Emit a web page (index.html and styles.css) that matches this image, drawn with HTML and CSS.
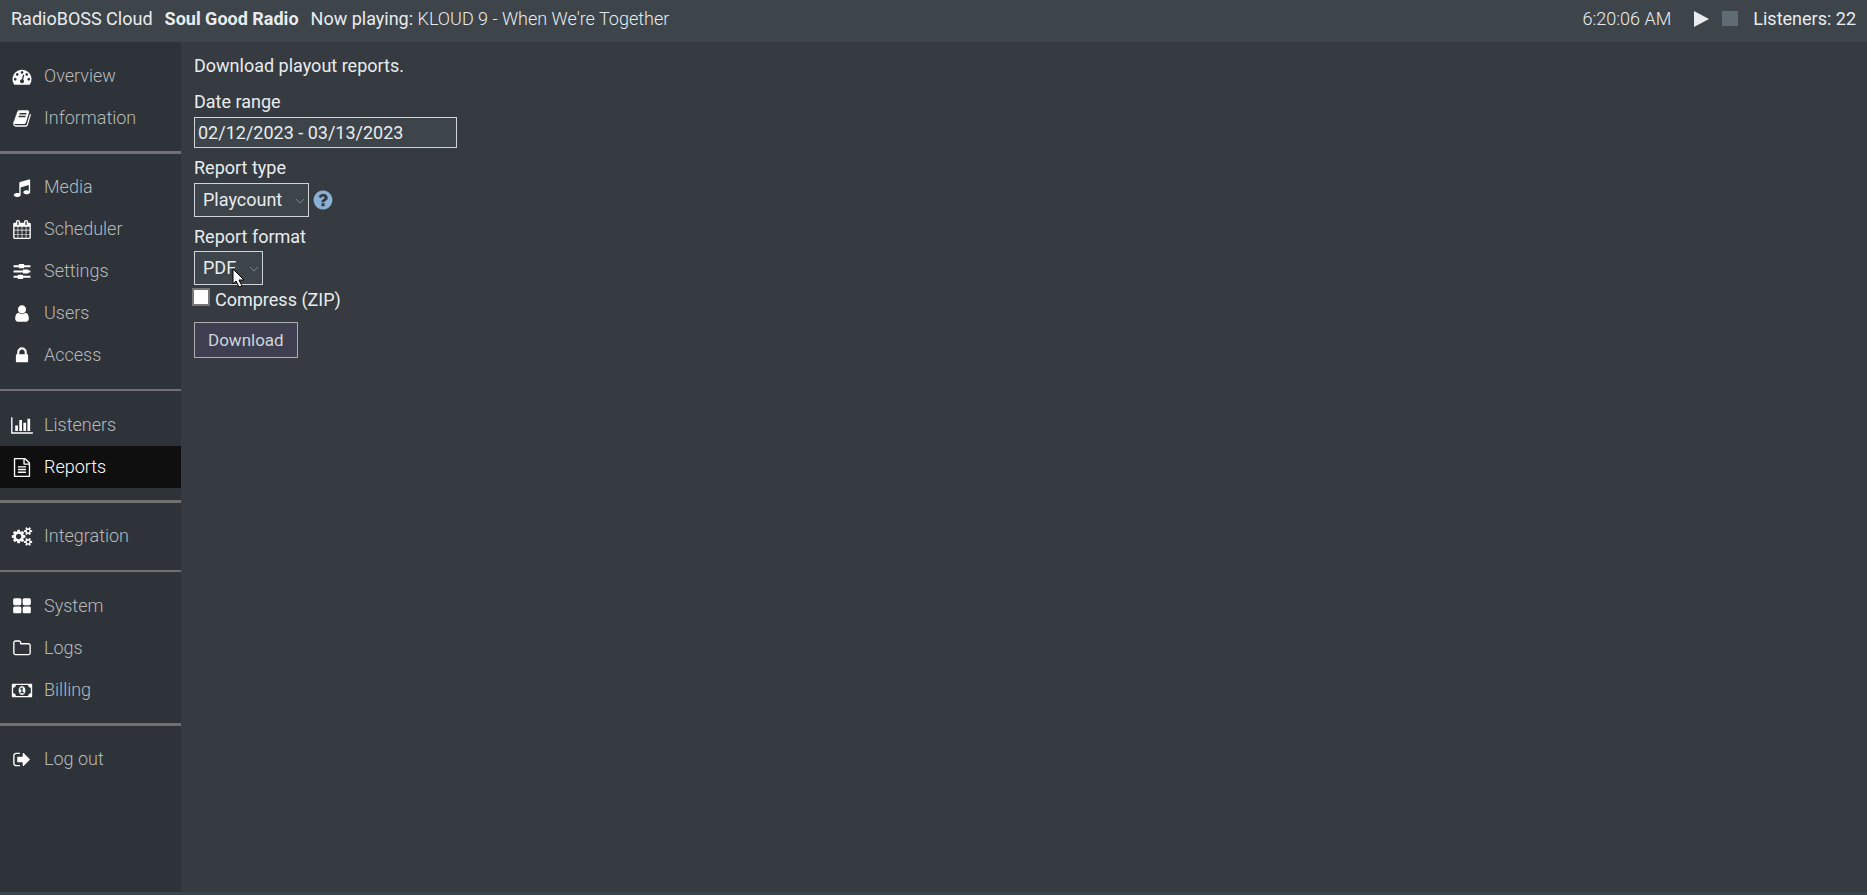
FILE: index.html
```html
<!DOCTYPE html>
<html lang="en">
<head>
  <meta charset="UTF-8" />
  <meta name="viewport" content="width=device-width, initial-scale=1.0"/>
  <title>RadioBOSS Cloud - Reports</title>
  <link rel="stylesheet" href="styles.css">
</head>
<body>
  <header class="topbar">
    <div class="topbar-left">
      <span>RadioBOSS Cloud</span>
      <strong>Soul Good Radio</strong>
      <span>Now playing: <span class="light">KLOUD 9 - When We're Together</span></span>
    </div>
    <div class="topbar-right">
      <span class="light">6:20:06 AM</span>
      <div class="player">
        <button class="player-btn" aria-label="Play"><svg width="16" height="18" viewBox="0 0 16 18"><path d="M0 1L15 9L0 17z"/></svg></button>
        <button class="player-btn stop" aria-label="Stop"><svg width="16" height="18" viewBox="0 0 16 18"><path d="M0 1h16v15H0z"/></svg></button>
      </div>
      <span>Listeners: 22</span>
    </div>
  </header>

  <div class="layout">
    <nav class="sidebar">
      <a href="#"><svg class="icon" viewBox="0 0 1792 1792"><path d="M384 1152q0-53-37.500-90.500t-90.500-37.500-90.500 37.500-37.500 90.500 37.500 90.500 90.500 37.500 90.500-37.500 37.500-90.500zm192-448q0-53-37.500-90.500t-90.500-37.500-90.500 37.500-37.500 90.500 37.500 90.500 90.500 37.500 90.500-37.500 37.500-90.500zm428 481l101-382q6-26-7.500-48.500t-38.500-29.500-48 6.500-30 39.500l-101 382q-60 5-107 43.500t-63 98.500q-20 77 20 146t117 89 146-20 89-117q16-60-6-117t-72-91zm660-33q0-53-37.500-90.500t-90.500-37.500-90.500 37.500-37.500 90.500 37.500 90.500 90.500 37.500 90.500-37.500 37.500-90.500zm-640-640q0-53-37.500-90.500t-90.500-37.500-90.500 37.500-37.500 90.500 37.500 90.500 90.500 37.500 90.500-37.500 37.500-90.500zm448 192q0-53-37.500-90.500t-90.500-37.500-90.500 37.500-37.500 90.500 37.500 90.500 90.500 37.500 90.500-37.500 37.500-90.500zm320 448q0 261-141 483-19 29-54 29h-1402q-35 0-54-29-141-221-141-483 0-182 71-348t191-286 286-191 348-71 348 71 286 191 191 286 71 348z"/></svg>Overview</a>
      <a href="#"><svg class="icon" viewBox="0 0 1792 1792"><path d="M1703 478q40 57 18 129l-275 906q-19 64-76.5 107.5t-122.500 43.500h-923q-77 0-148.500-53.500t-99.500-131.500q-24-67-2-127 0-4 3-27t4-37q1-8-3-21.500t-3-19.500q2-11 8-21t16.500-23.500 16.500-23.500q23-38 45-91.500t30-91.500q3-10 .5-30t-.5-28q3-11 17-28t17-23q21-36 42-92t25-90q1-9-2.500-32t.5-28q4-13 22-30.500t22-22.500q19-26 42.500-84.500t27.500-96.500q1-8-3-25.500t-2-26.500q2-8 9-18t18-23 17-21q8-12 16.500-30.500t15-35 16-36 19.500-32 26.500-23.500 36-11.500 47.500 5.500l-1 3q38-9 51-9h761q74 0 114 56t18 130l-274 906q-36 119-71.500 153.500t-128.500 34.500h-869q-27 0-38 15-11 16-1 43 24 70 144 70h923q29 0 56-15.500t35-41.500l300-987q7-22 5-57 38 15 59 43zm-1064 2q-4 13 2 22.500t20 9.500h608q13 0 25.500-9.500t16.500-22.500l21-64q4-13-2-22.500t-20-9.500h-608q-13 0-25.500 9.500t-16.500 22.500zm-83 256q-4 13 2 22.500t20 9.500h608q13 0 25.500-9.500t16.500-22.500l21-64q4-13-2-22.500t-20-9.500h-608q-13 0-25.500 9.500t-16.500 22.500z"/></svg>Information</a>
      <hr>
      <a href="#"><svg class="icon" viewBox="0 0 1792 1792"><path d="M1664 224v1120q0 50-34 89t-86 60.500-103.500 32-96.500 10.500-96.500-10.500-103.500-32-86-60.500-34-89 34-89 86-60.500 103.500-32 96.500-10.500q105 0 192 39v-537l-768 237v709q0 50-34 89t-86 60.500-103.500 32-96.500 10.500-96.500-10.500-103.500-32-86-60.500-34-89 34-89 86-60.500 103.500-32 96.500-10.500q105 0 192 39v-967q0-31 19-56.500t49-35.500l832-256q12-4 28-4 40 0 68 28t28 68z"/></svg>Media</a>
      <a href="#"><svg class="icon" viewBox="0 0 1792 1792"><path d="M192 1664h288v-288h-288v288zm352 0h320v-288h-320v288zm-352-352h288v-320h-288v320zm352 0h320v-320h-320v320zm-352-384h288v-288h-288v288zm736 736h320v-288h-320v288zm-384-736h320v-288h-320v288zm768 736h288v-288h-288v288zm-384-352h320v-320h-320v320zm-352-864v-288q0-13-9.500-22.500t-22.500-9.500h-64q-13 0-22.500 9.500t-9.500 22.500v288q0 13 9.500 22.500t22.500 9.500h64q13 0 22.500-9.500t9.500-22.500zm736 864h288v-320h-288v320zm-384-384h320v-288h-320v288zm384 0h288v-288h-288v288zm32-480v-288q0-13-9.500-22.500t-22.500-9.500h-64q-13 0-22.500 9.500t-9.500 22.500v288q0 13 9.500 22.500t22.500 9.500h64q13 0 22.500-9.500t9.500-22.500zm384-64v1280q0 52-38 90t-90 38h-1408q-52 0-90-38t-38-90v-1280q0-52 38-90t90-38h128v-96q0-66 47-113t113-47h64q66 0 113 47t47 113v96h384v-96q0-66 47-113t113-47h64q66 0 113 47t47 113v96h128q52 0 90 38t38 90z"/></svg>Scheduler</a>
      <a href="#"><svg class="icon" viewBox="0 0 18 18"><path d="M1 3h5v2H1zM11 3h6v2h-6zM6 2h5v4H6zM1 8h9v2H1zM15 8h2v2h-2zM10 7h5v4h-5zM1 13h4v2H1zM10 13h7v2h-7zM5 12h5v4H5z"/></svg>Settings</a>
      <a href="#"><svg class="icon" viewBox="0 0 1792 1792"><path d="M1536 1399q0 109-62.500 187t-150.500 78h-854q-88 0-150.500-78t-62.500-187q0-85 8.500-160.500t31.500-152 58.500-131 94-89 134.500-34.500q131 128 313 128t313-128q76 0 134.500 34.500t94 89 58.500 131 31.500 152 8.500 160.500zm-256-887q0 159-112.500 271.500t-271.500 112.500-271.500-112.500-112.500-271.500 112.500-271.500 271.500-112.500 271.500 112.500 112.500 271.500z"/></svg>Users</a>
      <a href="#"><svg class="icon" viewBox="0 0 1792 1792"><path d="M640 768h512v-192q0-106-75-181t-181-75-181 75-75 181v192zm832 96v576q0 40-28 68t-68 28h-960q-40 0-68-28t-28-68v-576q0-40 28-68t68-28h32v-192q0-184 132-316t316-132 316 132 132 316v192h32q40 0 68 28t28 68z"/></svg>Access</a>
      <hr class="thin">
      <a href="#"><svg class="icon" viewBox="0 0 2048 1792"><path d="M640 896v512h-256v-512h256zm384-512v1024h-256v-1024h256zm1024 1152v128h-2048v-1536h128v1408h1920zm-640-896v768h-256v-768h256zm384-384v1152h-256v-1152h256z"/></svg>Listeners</a>
      <a href="#" class="active"><svg class="icon" viewBox="0 0 1792 1792"><path d="M1596 380q28 28 48 76t20 88v1152q0 40-28 68t-68 28h-1344q-40 0-68-28t-28-68v-1600q0-40 28-68t68-28h896q40 0 88 20t76 48zm-444-244v376h376q-10-29-22-41l-313-313q-12-12-41-22zm384 1528v-1024h-416q-40 0-68-28t-28-68v-416h-768v1536h1280zm-1024-864q0-14 9-23t23-9h704q14 0 23 9t9 23v64q0 14-9 23t-23 9h-704q-14 0-23-9t-9-23v-64zm736 224q14 0 23 9t9 23v64q0 14-9 23t-23 9h-704q-14 0-23-9t-9-23v-64q0-14 9-23t23-9h704zm0 256q14 0 23 9t9 23v64q0 14-9 23t-23 9h-704q-14 0-23-9t-9-23v-64q0-14 9-23t23-9h704z"/></svg>Reports</a>
      <hr>
      <a href="#"><svg class="icon" viewBox="-64 0 1920 1792"><path d="M832 896q0-106-75-181t-181-75-181 75-75 181 75 181 181 75 181-75 75-181zm768 512q0-52-38-90t-90-38-90 38-38 90q0 53 37.500 90.500t90.500 37.500 90.500-37.500 37.500-90.500zm0-1024q0-52-38-90t-90-38-90 38-38 90q0 53 37.500 90.500t90.500 37.500 90.500-37.500 37.500-90.500zm-384 421v185q0 10-7 19.500t-16 10.500l-155 24q-11 35-32 76 34 48 90 115 7 11 7 20 0 12-7 19-23 30-82.500 89.500t-78.500 59.500q-11 0-21-7l-115-90q-37 19-77 31-11 108-23 155-7 24-30 24h-186q-11 0-20-7.500t-10-17.500l-23-153q-34-10-75-31l-118 89q-7 7-20 7-11 0-21-8-144-133-144-160 0-9 7-19 10-14 41-53t47-61q-23-44-35-82l-152-24q-10-1-17-9.500t-7-19.500v-185q0-10 7-19.500t16-10.500l155-24q11-35 32-76-34-48-90-115-7-11-7-20 0-12 7-20 22-30 82-89t79-59q11 0 21 7l115 90q34-18 77-32 11-108 23-154 7-24 30-24h186q11 0 20 7.500t10 17.500l23 153q34 10 75 31l118-89q8-7 20-7 11 0 21 8 144 133 144 160 0 8-7 19-12 16-42 54t-45 60q23 48 34 82l152 23q10 2 17 10.500t7 19.500zm640 533v140q0 16-149 31-12 27-30 52 51 113 51 138 0 4-4 7-122 71-124 71-8 0-46-47t-52-68q-20 2-30 2t-30-2q-14 21-52 68t-46 47q-2 0-124-71-4-3-4-7 0-25 51-138-18-25-30-52-149-15-149-31v-140q0-16 149-31 13-29 30-52-51-113-51-138 0-4 4-7 4-2 35-20t59-34 30-16q8 0 46 46.500t52 67.500q20-2 30-2t30 2q51-71 92-112l6-2q4 0 124 70 4 3 4 7 0 25-51 138 17 23 30 52 149 15 149 31zm0-1024v140q0 16-149 31-12 27-30 52 51 113 51 138 0 4-4 7-122 71-124 71-8 0-46-47t-52-68q-20 2-30 2t-30-2q-14 21-52 68t-46 47q-2 0-124-71-4-3-4-7 0-25 51-138-18-25-30-52-149-15-149-31v-140q0-16 149-31 13-29 30-52-51-113-51-138 0-4 4-7 4-2 35-20t59-34 30-16q8 0 46 46.500t52 67.500q20-2 30-2t30 2q51-71 92-112l6-2q4 0 124 70 4 3 4 7 0 25-51 138 17 23 30 52 149 15 149 31z"/></svg>Integration</a>
      <hr class="thin">
      <a href="#"><svg class="icon" viewBox="0 0 1792 1792"><path d="M832 1024v384q0 52-38 90t-90 38h-512q-52 0-90-38t-38-90v-384q0-52 38-90t90-38h512q52 0 90 38t38 90zm0-768v384q0 52-38 90t-90 38h-512q-52 0-90-38t-38-90v-384q0-52 38-90t90-38h512q52 0 90 38t38 90zm896 768v384q0 52-38 90t-90 38h-512q-52 0-90-38t-38-90v-384q0-52 38-90t90-38h512q52 0 90 38t38 90zm0-768v384q0 52-38 90t-90 38h-512q-52 0-90-38t-38-90v-384q0-52 38-90t90-38h512q52 0 90 38t38 90z"/></svg>System</a>
      <a href="#"><svg class="icon" viewBox="0 0 1792 1792"><path d="M1600 1312v-704q0-40-28-68t-68-28h-704q-40 0-68-28t-28-68v-64q0-40-28-68t-68-28h-320q-40 0-68 28t-28 68v960q0 40 28 68t68 28h1216q40 0 68-28t28-68zm128-704v704q0 92-66 158t-158 66h-1216q-92 0-158-66t-66-158v-960q0-92 66-158t158-66h320q92 0 158 66t66 158v32h672q92 0 158 66t66 158z"/></svg>Logs</a>
      <a href="#"><svg class="icon" viewBox="0 0 1920 1792"><path d="M768 1152h384v-96h-128v-448h-114l-148 137 77 80q42-37 55-57h2v288h-128v96zm512-256q0 70-21 142t-59.500 134-101.500 101-138 39-138-39-101.500-101-59.500-134-21-142 21-142 59.500-134 101.500-101 138-39 138 39 101.500 101 59.500 134 21 142zm512 256v-512q-106 0-181-75t-75-181h-1152q0 106-75 181t-181 75v512q106 0 181 75t75 181h1152q0-106 75-181t181-75zm128-832v1152q0 26-19 45t-45 19h-1792q-26 0-45-19t-19-45v-1152q0-26 19-45t45-19h1792q26 0 45 19t19 45z"/></svg>Billing</a>
      <hr>
      <a href="#"><svg class="icon" viewBox="0 0 1792 1792"><path d="M704 1440q0 4 1 20t.5 26.500-3 23.500-10 19.500-20.500 6.500h-320q-119 0-203.500-84.500t-84.500-203.500v-704q0-119 84.500-203.500t203.500-84.500h320q13 0 22.500 9.500t9.500 22.500q0 4 1 20t.5 26.500-3 23.500-10 19.500-20.500 6.500h-320q-66 0-113 47t-47 113v704q0 66 47 113t113 47h312l11.500 1 11.500 3 8 5.500 7 9 2 13.500zm928-544q0 26-19 45l-544 544q-19 19-45 19t-45-19-19-45v-288h-448q-26 0-45-19t-19-45v-384q0-26 19-45t45-19h448v-288q0-26 19-45t45-19 45 19l544 544q19 19 19 45z"/></svg>Log out</a>
    </nav>

    <main class="content">
      <p>Download playout reports.</p>
      <form>
        <div class="field">
          <label for="range">Date range</label>
          <input type="text" id="range" class="range" value="02/12/2023 - 03/13/2023">
        </div>
        <div class="field">
          <label for="type">Report type</label>
          <div class="select-row">
            <div class="select">
              <select id="type"><option>Playcount</option></select>
              <svg class="arrow" width="10" height="6" viewBox="0 0 10 6"><path d="M1 1l4 4 4-4"/></svg>
            </div>
            <a href="#" class="help" aria-label="Help"><svg width="22" height="22" viewBox="0 0 1792 1792"><path d="M1024 1376v-192q0-14-9-23t-23-9h-192q-14 0-23 9t-9 23v192q0 14 9 23t23 9h192q14 0 23-9t9-23zm256-672q0-88-55.500-163t-138.500-116-170-41q-243 0-371 213-15 24 8 42l132 100q7 6 19 6 16 0 25-12 53-68 86-92 34-24 86-24 48 0 85.500 26t37.500 59q0 38-20 61t-68 45q-63 28-115.500 86.500t-52.500 125.500v36q0 14 9 23t23 9h192q14 0 23-9t9-23q0-19 21.500-49.500t54.500-49.500q32-18 49-28.500t46-35 44.500-48 28-60.500 12.500-81zm384 192q0 209-103 385.500t-279.500 279.500-385.500 103-385.500-103-279.500-279.500-103-385.500 103-385.500 279.500-279.500 385.500-103 385.500 103 279.500 279.500 103 385.500z"/></svg></a>
          </div>
        </div>
        <div class="field last">
          <label for="format">Report format</label>
          <div class="select-row">
            <div class="select">
              <select id="format"><option>PDF</option></select>
              <svg class="arrow" width="10" height="6" viewBox="0 0 10 6"><path d="M1 1l4 4 4-4"/></svg>
              <svg class="pointer" width="14" height="20" viewBox="0 0 14 20"><path d="M1 1v15l3-3 3 6 3-1-3-6h5z"/></svg>
            </div>
          </div>
        </div>
        <div class="check">
          <input type="checkbox" id="zip">
          <label for="zip">Compress (ZIP)</label>
        </div>
        <button type="button" class="download">Download</button>
      </form>
    </main>
  </div>
</body>
</html>
```
FILE: styles.css
```css
* {
  box-sizing: border-box;
}

body {
  margin: 0;
  min-height: 100vh;
  display: flex;
  flex-direction: column;
  background-color: #353b41;
  color: #e9ecef;
  font-family: Roboto, "Liberation Sans", sans-serif;
  font-size: 18px;
  line-height: 24px;
  border-bottom: 3px solid #3b434c;
}

.light {
  font-weight: 300;
}

/* top bar */
.topbar {
  display: flex;
  justify-content: space-between;
  align-items: center;
  height: 42px;
  padding: 0 11px 4px;
  background-color: #3d444a;
}

.topbar-left {
  display: flex;
  gap: 12px;
}

.topbar-right {
  display: flex;
  align-items: center;
  gap: 15px;
}

.player {
  display: flex;
  gap: 12px;
  padding-left: 8px;
}

.player-btn {
  display: flex;
  padding: 0;
  border: none;
  background: none;
  fill: #e9ecef;
  cursor: pointer;
}

.stop {
  fill: #5f6c74;
}

/* sidebar */
.layout {
  flex: 1;
  display: flex;
}

.sidebar {
  width: 181px;
  flex-shrink: 0;
  padding-top: 13px;
  background-color: #2d3339;
}

.sidebar a {
  display: flex;
  align-items: center;
  gap: 11px;
  height: 42px;
  padding-left: 11px;
  color: #b9b9b9;
  font-weight: 300;
  text-decoration: none;
}

.sidebar a.active {
  background-color: #0f0f0f;
  color: #fff;
}

.sidebar hr {
  height: 3px;
  margin: 12px 0;
  border: none;
  background-color: #707070;
}

.sidebar hr.thin {
  height: 2px;
  margin: 13px 0;
}

.icon {
  width: 22px;
  height: 19px;
  fill: #fff;
}

/* report form */
.content {
  flex: 1;
  padding: 12px 13px;
}

.content p {
  margin: 0 0 12px;
}

.field {
  margin-bottom: 8px;
}

.field.last {
  margin-bottom: 3px;
}

.field label {
  display: block;
  margin-bottom: 3px;
}

.field.last label {
  margin-bottom: 2px;
}

.range,
select {
  display: block;
  border: 1px solid #ced4da;
  border-radius: 0;
  background-color: #3d444a;
  color: #e9ecef;
  font: inherit;
}

.range {
  width: 263px;
  height: 31px;
  padding: 0 3px;
}

.select-row {
  display: flex;
  align-items: center;
  gap: 3px;
}

.select {
  position: relative;
}

select {
  height: 34px;
  padding: 0 25px 0 8px;
  appearance: none;
}

.arrow {
  position: absolute;
  right: 4px;
  top: 15px;
  fill: none;
  stroke: #7b8186;
}

.help {
  display: flex;
  fill: #8ab0d6;
}

.pointer {
  position: absolute;
  left: 38px;
  top: 17px;
  fill: #fff;
  stroke: #000;
}

.check {
  display: flex;
  gap: 5px;
  margin-bottom: 10px;
  margin-left: -2px;
}

.check input {
  width: 18px;
  height: 18px;
  margin: 0;
  border: 2px solid #767676;
  background-color: #fff;
  appearance: none;
}

.check input:checked {
  background-color: #8ab0d6;
}

.download {
  height: 36px;
  padding: 0 13px;
  border: 1px solid #a9acb3;
  background-color: #3e3f50;
  color: #ced4da;
  font: inherit;
  font-size: 17px;
  cursor: pointer;
}
```
